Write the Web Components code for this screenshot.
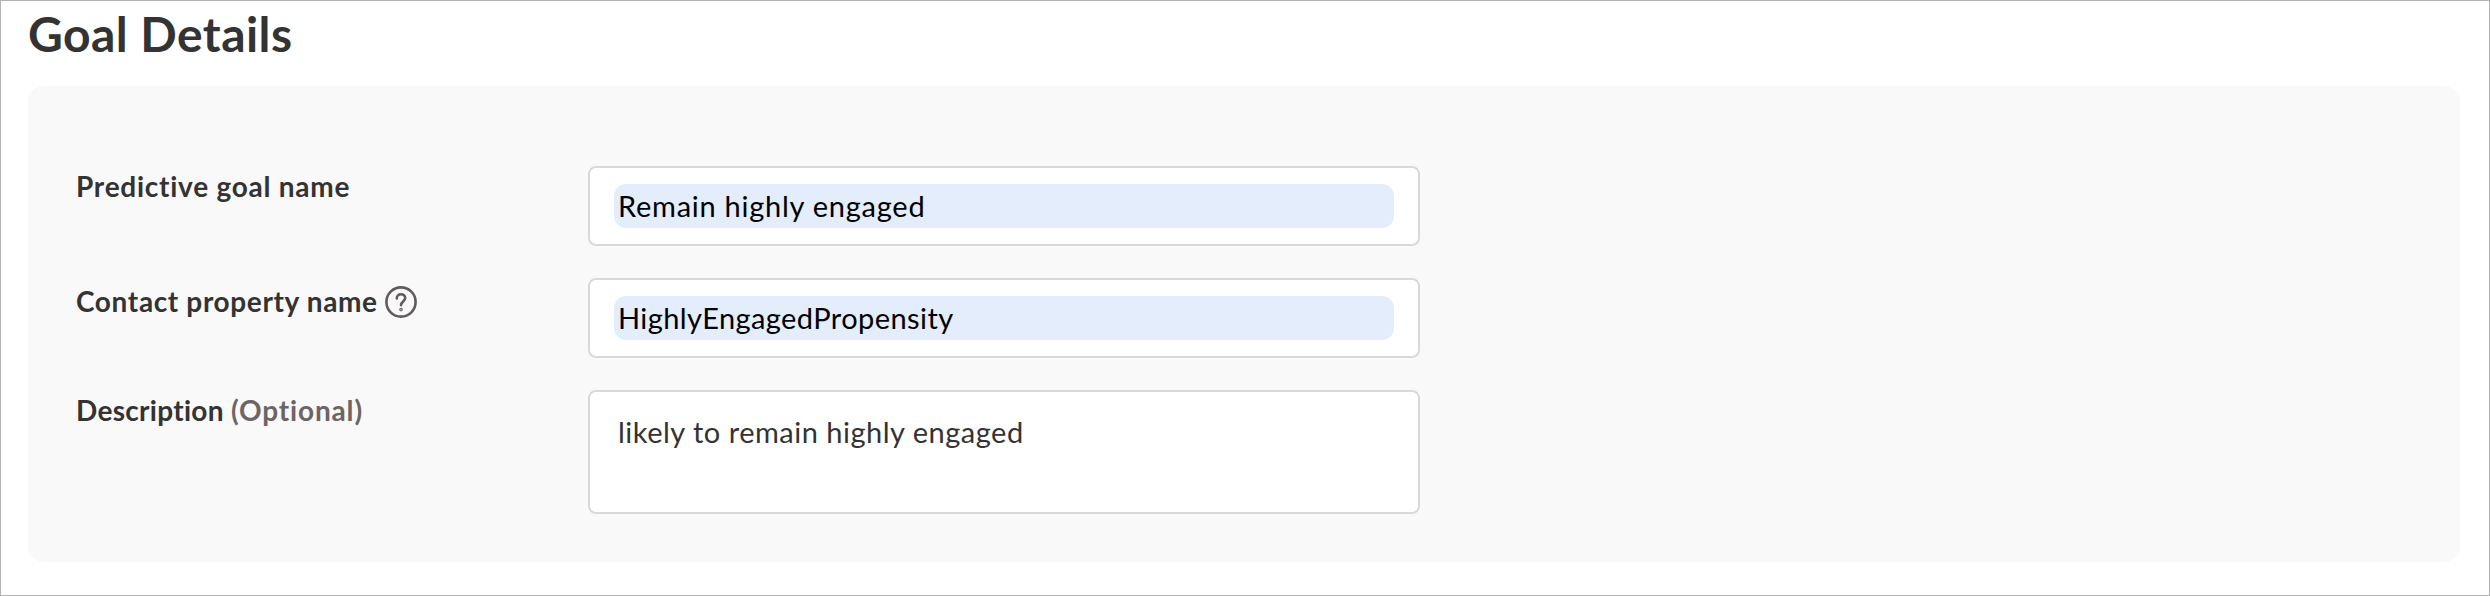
<!DOCTYPE html>
<html>
<head>
<meta charset="utf-8">
<title>Goal Details</title>
<style>
  html, body { margin: 0; padding: 0; background: #fff; }
  body { font-family: "Lato", "Noto Sans", sans-serif; color: #333; }
</style>
</head>
<body>
<goal-details heading="Goal Details">
  <form-row>
    <span slot="label">Predictive goal name</span>
    <text-field autofill style="letter-spacing: 0.75px">Remain highly engaged</text-field>
  </form-row>
  <form-row>
    <span slot="label" style="letter-spacing: 0.64px">Contact property name <help-icon></help-icon></span>
    <text-field autofill style="letter-spacing: 0.42px">HighlyEngagedPropensity</text-field>
  </form-row>
  <form-row>
    <span slot="label" style="letter-spacing: 0.3px">Description <opt-note>(Optional)</opt-note></span>
    <text-field multiline style="letter-spacing: 0.5px">likely to remain highly engaged</text-field>
  </form-row>
</goal-details>

<script>
class GoalDetails extends HTMLElement {
  constructor() {
    super();
    this.shadowDOM = this.attachShadow({ mode: "open" });
  }
  connectedCallback() {
    this.shadowDOM.innerHTML = `
      <style>
        :host {
          display: block;
          box-sizing: border-box;
          width: 2490px;
          height: 596px;
          border: 1px solid #b2b2b2;
          padding: 0 29px 0 27px;
          background: #fff;
          overflow: hidden;
        }
        h1 {
          margin: 0;
          height: 85px;
          font-size: 48px;
          line-height: 66px;
          font-weight: 700;
          letter-spacing: 0.45px;
          color: #333;
        }
        .panel {
          display: flex;
          flex-direction: column;
          gap: 32px;
          padding: 80px 48px 48px;
          border-radius: 16px;
          background: #f9f9f9;
        }
      </style>
      <h1>${this.getAttribute("heading")}</h1>
      <div class="panel"><slot></slot></div>
    `;
  }
}
customElements.define("goal-details", GoalDetails);

class FormRow extends HTMLElement {
  constructor() {
    super();
    this.shadowDOM = this.attachShadow({ mode: "open" });
    this.shadowDOM.innerHTML = `
      <style>
        :host {
          display: grid;
          grid-template-columns: 512px 832px;
          align-items: start;
        }
        .label {
          font-size: 28px;
          line-height: 40px;
          font-weight: 700;
          letter-spacing: 0.75px;
          color: #333;
        }
      </style>
      <div class="label"><slot name="label"></slot></div>
      <slot></slot>
    `;
  }
}
customElements.define("form-row", FormRow);

class TextField extends HTMLElement {
  constructor() {
    super();
    this.shadowDOM = this.attachShadow({ mode: "open" });
    this.shadowDOM.innerHTML = `
      <style>
        :host {
          display: block;
          box-sizing: border-box;
          min-height: 80px;
          padding: 16px 24px;
          border: 2px solid #d9d9d9;
          border-radius: 8px;
          background: #fff;
          font-size: 29px;
          line-height: 44px;
          letter-spacing: 0.55px;
          color: #333;
        }
        :host([autofill]) { color: #000; }
        :host([multiline]) { height: 124px; padding-top: 18px; }
        .value { display: block; padding: 0 4px; border-radius: 12px; height: 44px; }
        :host([autofill]) .value { background: #e4edfc; }
      </style>
      <div class="value"><slot></slot></div>
    `;
  }
}
customElements.define("text-field", TextField);

class OptNote extends HTMLElement {
  constructor() {
    super();
    this.shadowDOM = this.attachShadow({ mode: "open" });
    this.shadowDOM.innerHTML = `
      <style>:host { display: inline; color: #6d6464; letter-spacing: 0.85px; }</style>
      <slot></slot>
    `;
  }
}
customElements.define("opt-note", OptNote);

class HelpIcon extends HTMLElement {
  constructor() {
    super();
    this.shadowDOM = this.attachShadow({ mode: "open" });
    this.shadowDOM.innerHTML = `
      <style>
        :host {
          display: inline-block;
          width: 32px;
          height: 32px;
          margin: 8px 0 0 0;
          vertical-align: -6px;
        }
        svg { display: block; }
      </style>
      <svg width="32" height="32" viewBox="0 0 32 32" fill="none" stroke="#625b5b" stroke-width="2.6" stroke-linecap="round">
        <circle cx="16" cy="16" r="14.6"/>
        <path d="M11.8 12.4c0-2.5 1.9-4.1 4.2-4.1s4.2 1.5 4.2 3.8c0 3.2-4.2 3.6-4.2 7"/>
        <circle cx="16" cy="23.6" r="0.5" fill="#625b5b"/>
      </svg>
    `;
  }
}
customElements.define("help-icon", HelpIcon);
</script>
</body>
</html>
